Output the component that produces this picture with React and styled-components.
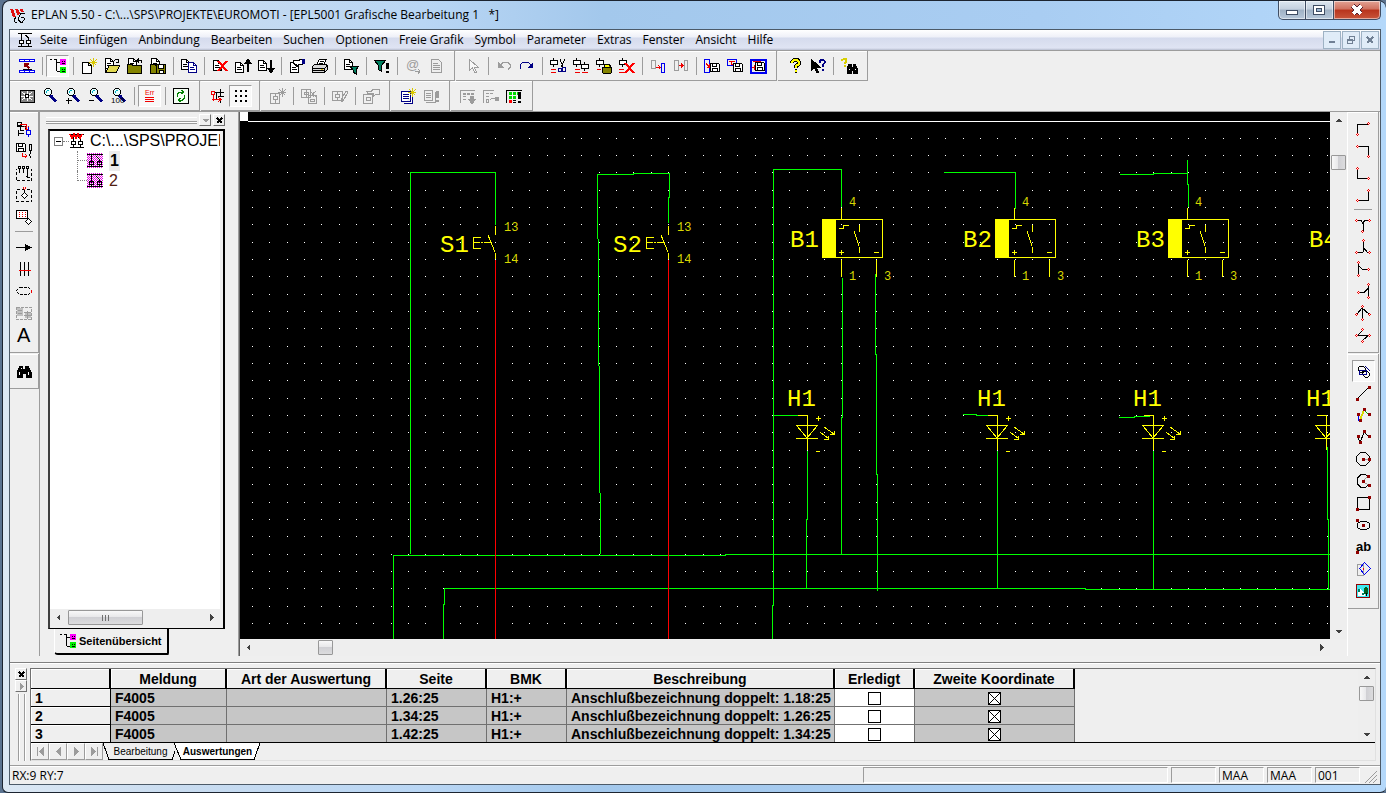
import { memo } from "react";
import styled, { createGlobalStyle, css } from "styled-components";

const GlobalStyle = createGlobalStyle`
  * {
    box-sizing: border-box;
  }

  body {
    margin: 0;
    background: #5b7390;
    color: #000;
    font: 12px/16px "Open Sans", "Noto Sans", sans-serif;
  }

  button {
    margin: 0;
    padding: 0;
    border: 0;
    border-radius: 0;
    background: none;
    color: inherit;
    font: inherit;
  }
`;

const FACE = "#efefef";
const SHADOW = "#9c9c9c";
const K = "#000";
const R = "#f00000";
const M = "#900000";
const B = "#0000f0";
const N = "#000084";
const G = "#9c9c9c";
const Y = "#ffff00";
const OLIVE = "#848400";
const TEAL = "#008060";

/* Glyphs live on a 16x16 grid. Shape: [path, stroke, fill, width, dash]; label: { t, x, y, size, fill, bold } */
const page = (x, y, stroke = K, fill = "#fff") => [
  [`M${x}.5 ${y}.5h5l3 3v7h-8z`, stroke, fill],
  [`M${x + 5}.5 ${y}.5v3h3M${x + 2} ${y + 5}.5h4M${x + 2} ${y + 7}.5h5`, stroke],
];
const star = (stroke = "#d8c800") => [["M12.5 0v9M8 4.5h8M9.5 1.5l6 6M15.5 1.5l-6 6", stroke]];
const symbol = (x, y, stroke = K) => [
  [`M${x}.5 ${y + 2}.5h7v4h-7zM${x + 3}.5 ${y}v3M${x + 3}.5 ${y + 7}v2`, stroke, "#fff"],
];
const disk = (x, y) => [
  [`M${x}.5 ${y}.5h8l1 1v7h-9z`, K, "#fff"],
  [`M${x + 2}.5 ${y}.5v3h4v-3M${x + 2}.5 ${y + 9}v-4h5v4`, K],
];
const lens = [
  ["M4.5 .5h3l2 2v3l-2 2h-3l-2-2v-3z", K, "#e8ffff"],
  ["M5 2.5h2M4.5 3v2", "#00b0c0"],
  ["M8.5 7.5l5.5 6", N, null, 3],
];
const nodes = (...points) => [[points.map(([x, y]) => `M${x - 1} ${y}l1-1 1 1-1 1z`).join(""), R, "#fff"]];
const squares = (...points) => [[points.map(([x, y]) => `M${x - 1} ${y - 1}h3v3h-3z`).join(""), null, M]];
const funnel = (x, y) => [[`M${x} ${y}h9l-3 4v4l-3-2v-2z`, K, TEAL]];
const schema = [
  ["M1 1.5h14M1 14.5h14M4.5 1v7M11.5 5v4M8 3l4 3", K],
  ["M2.5 8.5h4v3h-4zM9.5 8.5h4v3h-4zM4.5 12v3M11.5 12v3", K, "#fff"],
];

const GLYPHS = {
  rails: [
    ["M.5 1.5h15v2h-15zM5.5 1v2M10.5 1v2M.5 12.5h15v2h-15zM5.5 12v2M10.5 12v2", B, "#fff"],
    ["M10.5 10.5l-5-5M5.5 9v-3.5h4", M, null, 2],
    ["M4 11.5h9", K],
  ],
  pageTree: [
    ["M0 1.5h2M4 1.5h2M6.5 1v12M7 13.5h3M7 4.5h3", K],
    ["M10 1h6v6h-6z", null, "#ff00ff"],
    ["M10 9h6v6h-6z", null, "#00f000"],
    ["M12 3.5h1M14 3.5h1M12 5.5h3M12 11.5h1M14 11.5h1M12 13.5h3", K],
  ],
  newPage: [["M1.5 4.5h6l3 3v8h-9zM7.5 4.5v3h3", K, "#fff"], ...star()],
  openPage: [
    ...page(1, 0),
    ["M10 2.5l2-1h2v3M12 4.5h3", K],
    ["M1.5 14.5v-7M1.5 14.5l4-7h10l-3 7z", K, "#e0d850"],
  ],
  closePage: [
    ...page(1, 0),
    ["M14.5 5v-3h-4M12 .5l-2 2 2 2", K],
    ["M.5 15v-9h4l1 1h9v8z", K, OLIVE],
  ],
  savePage: [
    ...page(1, 0),
    ["M.5 15v-9h4l1 1h9v8z", K, OLIVE],
    ["M6.5 6.5h9v9h-9z", K, OLIVE],
    ["M8.5 7v3h5v-3M9.5 15v-3h4v3", K, "#fff"],
  ],
  copyPage: [...page(0, 1), ...page(7, 4, N)],
  deletePage: [...page(1, 2), ["M6 3l9 10M15 3l-9 10", "#ff0000", null, 2]],
  pageUp: [...page(0, 4), ["M13 14v-12", K, null, 2], ["M9.5 5.5l3.5-4 3.5 4z", K, K]],
  pageDown: [...page(0, 2), ["M13 2v12", K, null, 2], ["M9.5 10.5l3.5 4 3.5-4z", K, K]],
  pageProps: [...page(1, 4), ["M4 2.5h6l1-1h2v5h-3l-2 2-1-2-3-1z", K, "#fff"], ["M13 1h3v5h-3z", null, N]],
  print: [
    ["M4.5 7l3-6h7l-3 6", K, "#fff"],
    ["M8 3.5h4M7 5.5h4", K],
    ["M.5 8.5l2-2h11l2 1v4l-3 3h-12z", K, "#d8d8d8"],
    ["M1 10.5h11l3-2M1 12.5h11M12.5 11v3", K],
    ["M9 11.5h2", "#e0c000"],
  ],
  exportPage: [...page(1, 1), ...funnel(7, 8)],
  filter: [["M.5 2.5h11l-4 5v6l-3-2v-4z", K, TEAL], ["M13.5 5v6M13.5 13v2", K, null, 3]],
  at: [{ t: "@", x: 1, y: 11, size: 13, fill: G }, ["M10 13.5h5M13 11l2 2-2 3", G]],
  sheet: [["M3.5 1.5h7l3 3v10h-10zM5 5.5h5M5 7.5h7M5 9.5h7M5 11.5h7", G]],
  pointer: [["M4.5 1.5v11l3-3 2 5h2l-2-5h4z", G, "#f8f8f8"]],
  undo: [["M4 7.5l3-3h5l2 2v3l-2 2", G], ["M2 4v6h6z", null, G]],
  redo: [["M2 11l-1-2v-2l3-3h5l3 3", N], ["M14 4v6h-6z", null, N]],
  cut: [...symbol(0, 0), ["M1 11.5h5M1 14.5h5", R], ["M10 1l3 8M15 1l-4 8", K], ["M8.5 10.5h3v3h-3zM12.5 9.5h3v4h-3z", N]],
  copy: [...symbol(0, 0), ...symbol(8, 4), ["M2 11.5h5M2 14.5h5M9 14.5h6", R]],
  paste: [
    ...symbol(0, 0),
    ["M1 11.5h4", R],
    ["M6.5 9.5h9v5l-1 1h-7l-1-1zM8 9l1-3h4l2 3", K, OLIVE],
    ["M9 7.5h4", Y, null, 2],
  ],
  remove: [...symbol(0, 0), ["M0 11.5h5M0 14.5h5", R], ["M6 5l9 10M15 5l-9 10", "#ff0000", null, 2]],
  moveTo: [["M1.5 2.5h4v8h-4z", G], ["M6 9.5h5M8.5 7.5l2 2-2 2", R], ["M11.5 5.5h3v9h-3z", B]],
  moveBetween: [["M1.5 2.5h4v10h-4zM11.5 2.5h3v10h-3z", G], ["M6 7.5h4M8 5.5l2 2-2 2", R]],
  macroWindow: [["M.5 1.5h5v13h-5z", B], ["M2 5l3 4M5 6v3h-2", R], ...disk(6, 5)],
  macroSymbol: [["M.5 1.5h9v6h-9z", B], ["M2 3.5h6M4 3v3h4", R], ...disk(6, 5)],
  macroPage: [["M.5 1.5h15v13h-15z", B, null, 2], ["M3 3.5h8M2 9.5h4M4 7.5l2 2-2 2", R], ...disk(5, 4)],
  help: [
    ["M5 5V4l2-2h4l1 2v2l-3 2v2M8 13h2", K, null, 4],
    ["M5 5V4l2-2h3l2 2v2l-3 2v2M8 13h2", Y, null, 2],
  ],
  contextHelp: [
    ["M1.5 1.5v11l3-3 2 5h2l-2-5h4z", K, K],
    ["M9.5 5V3l2-1h2l1 1v2l-2 2v2M12 11.5h2", N, null, 2],
  ],
  searchHelp: [
    ["M1 3V2l2-1h2v3l-2 2M2.5 8h2", "#d8d000", null, 2],
    ["M6 15v-5l2-4h2v3h2v-3h2l2 4v5h-4v-3h-2v3z", K, K],
    ["M8 11.5h1M14 11.5h1", "#fff"],
  ],
  fit: [
    ["M1 2h14v12h-14z", K, "#848484"],
    ["M3 4l10 8M13 4l-10 8M8 3v3M8 10v3M2 8h4M10 8h4", "#fff"],
    ["M6.5 6.5h3v3h-3z", K, "#fff"],
  ],
  zoom: lens,
  zoomIn: [...lens, ["M1 12.5h6M3.5 10v6", K]],
  zoomOut: [...lens, ["M1 12.5h5", K]],
  zoomAll: [...lens, { t: "100", x: 0, y: 15, size: 8, fill: K }],
  errors: [{ t: "Err", x: 3, y: 7, size: 7, fill: R }, ["M3 9.5h9M3 11.5h9M3 13.5h9", R]],
  refresh: [
    ["M.5 .5h15v15h-15z", K, "#f4fff4"],
    ["M4.5 9v-3l2-2h4M8.5 2l2 2-2 2M11.5 7v3l-2 2h-4M7.5 10l-2 2 2 2", "#008000"],
  ],
  links: [
    ["M4 4.5h10M8 8.5h6M6.5 4v7M10.5 1v7M3 11.5h9M10.5 11v4", K],
    ["M1.5 3.5h3v3h-3zM3.5 7v6M2 11.5h9M8 9l3 2.5-3 2.5", R],
  ],
  gridDots: [["M2 2h2v2h-2zM7 2h2v2h-2zM12 2h2v2h-2zM2 7h2v2h-2zM7 7h2v2h-2zM12 7h2v2h-2zM2 12h2v2h-2zM7 12h2v2h-2zM12 12h2v2h-2z", null, K]],
  symNew: [["M.5 5.5h9v10h-9zM3 8.5h4v3h-4zM5.5 6v2M5.5 12v3", G], ["M12.5 0v9M8 4.5h8M9.5 1.5l6 6M15.5 1.5l-6 6", G]],
  symCopy: [["M.5 1.5h9v8h-9zM3 4.5h4v2h-4zM5.5 2v7", G], ["M7.5 7.5h8v8h-8zM9 11.5h4v2h-4zM12.5 4v5M9 3l6 6M15 3l-6 6", G]],
  symEdit: [["M.5 3.5h10v9h-10zM3 6.5h4v3h-4zM5.5 4v3M5.5 10v2M14 3l-5 9v2l2-1 5-9z", G]],
  symHand: [["M.5 6.5h9v9h-9zM3 9.5h4v3h-4zM4 3.5h4l2-2h6v5h-3l-3 2v-3h-5z", G]],
  listNew: [["M1.5 3.5h9v10h-9zM3.5 15.5h9v-9", N, "#fff"], ["M3 6.5h6M3 8.5h6M3 10.5h6", N], ...star()],
  listCheck: [["M1.5 2.5h8v10h-8zM3 5.5h5M3 7.5h5M3 9.5h5M3 14.5h9v-11", G], ["M14 3v7M14 12v2", G, null, 3]],
  tableDown: [
    ["M.5 15v-13h14M3 8.5h3M3 11.5h3", G],
    ["M3 5.5h3M7 5.5h3M11 5.5h3", G, null, 2],
    ["M12 8v4", G, null, 4],
    ["M8.5 11.5h7l-3.5 4z", G, G],
  ],
  tableLink: [["M.5 15v-13h10M3 5.5h3M7 5.5h3M3 8.5h3M3 11.5h2v3h-2zM7 12l2-2h3", G], ["M12 9h4v4h-4z", null, G]],
  tableCheck: [
    ["M.5 15v-13h15", K],
    ["M3 4h3v3h-3zM7 4h3v3h-3zM11 4h3v3h-3zM3 8h3v3h-3zM7 8h3v3h-3z", null, "#00d800"],
    ["M3 12h3v3h-3z", null, "#ff0000"],
    ["M7 12.5h3M7 14.5h3", K],
    ["M13 4v7M13 13v2", K, null, 3],
  ],
  wiring: [
    ["M1.5 1.5h4v3h-4zM.5 5.5h4v4M.5 5.5h10M2.5 9v6M4 9.5h4M2.5 12.5h5M9.5 6v3", K],
    ["M4 3.5h6v3M8 5l3 3M9 8h3v-3", R],
    ["M10.5 9.5h4v4h-4zM12.5 6v3M12.5 14v2", B],
  ],
  diskSwitch: [...disk(0, 0), ["M13.5 1.5h2v6h-2zM14.5 8v3M13 11l2 4", K], ["M6 10v3h5M9 11l2 2-2 2", R]],
  terminals: [
    ["M.5 15v-11M.5 15.5h15v-12", K, null, 1, "3 2"],
    ["M2.5 1.5h2v2h-2zM6.5 1.5h2v2h-2zM10.5 1.5h2v2h-2zM3.5 4v4M7.5 4v4M11.5 4v9M10 11l4 2", K],
  ],
  blackBox: [["M.5 2.5h15v12h-15z", K, null, 1, "3 2"], ["M8.5 5.5l3 3-3 3-3-3zM8.5 2v3", K, "#fff"], ["M7 .5l1.5 2L10 .5", R]],
  cabinet: [["M.5 1.5h11v8h-11z", K, "#fff"], ["M3.5 3v5M6.5 3v5M9.5 3v5", R, null, 1, "1 1"], ["M12.5 9.5l3 3-3 3-3-3z", K, "#fff"]],
  arrow: [["M0 8.5h12", K], ["M9 5l7 3.5-7 3.5z", null, K]],
  cable: [["M4.5 1v14M8.5 1v14M12.5 1v14", K], ["M3 9.5h12", R]],
  shield: [["M3.5 4.5h9l3 3v1l-3 3h-9l-3-3v-1z", K, null, 1, "3 1"], ["M15 7v3", R]],
  plcBox: [["M.5 2.5h15v12h-15z", G, null, 1, "3 1"], ["M1 3h6v8h-6zM9 7h6v6h-6z", null, "#c0c0c0"], ["M2 5.5h4M2 8.5h4M8 7.5h7M8 10.5h7M11.5 6v8", G]],
  letter: [{ t: "A", x: 1, y: 15, size: 20, fill: K }],
  binoculars: [["M1 14v-5l3-6h2l1 3h2l1-3h2l3 6v5h-5v-4h-4v4z", K, K], ["M3.5 9v3M12.5 9v3M5 5v1", "#fff"]],
  corner1: [["M2.5 13v-10h11", K], ...nodes([2.5, 13.5], [13.5, 2.5])],
  corner2: [["M2.5 3.5h11v10", K], ...nodes([2.5, 3.5], [13.5, 13.5])],
  corner3: [["M2.5 3v10h11", K], ...nodes([2.5, 3.5], [13.5, 13.5])],
  corner4: [["M13.5 3v10h-11", K], ...nodes([13.5, 3.5], [2.5, 13.5])],
  teeDown: [["M1 3.5h5l2 3 2-3h4M8.5 4v11", K], ...nodes([1.5, 3.5], [14.5, 3.5], [7.5, 14.5])],
  teeUp: [["M1 13.5h7M8.5 2v11M9 9l3 4h2", K], ...nodes([8.5, 1.5], [1.5, 13.5], [14.5, 13.5])],
  teeRight: [["M3.5 2v13M4 5l3 3h7", K], ...nodes([3.5, 1.5], [3.5, 14.5], [13.5, 8.5])],
  teeLeft: [["M13.5 2v13M3 9.5h6l4-4", K], ...nodes([13.5, 1.5], [13.5, 14.5], [3.5, 9.5])],
  crossUp: [["M7.5 2v12M2 9l5-6 7 6", K], ...nodes([7.5, 1.5], [1.5, 9.5], [7.5, 14.5], [14.5, 9.5])],
  crossJump: [["M1 8.5h14M3 8l5-5M8 13l6-5M3 8h10", K], ...nodes([7.5, 2.5], [1.5, 8.5], [14.5, 8.5], [7.5, 14.5])],
  shapes: [["M4.5 3.5h4l2 2v2l-2 2h-3l-2-2v-3zM7.5 8.5h5l2 2v2l-2 2h-2l-3-3z", K], ["M4.5 7.5h7v4h-7zM10 3l5 5", N]],
  line: [["M2 14l12-12", K], ...squares([2, 14], [14, 2])],
  polyColor: [["M3.5 7v7", B], ["M5 13l4-10", "#d8d800", null, 2], ["M9 3l5 5", "#00b000"], ...squares([3, 7], [5, 13], [9, 2], [14, 7])],
  poly: [["M3 7l2 7 4-11 5 5", K], ...squares([3, 7], [5, 13], [9, 2], [14, 7])],
  circle: [["M5.5 1.5h5l4 4v5l-4 4h-5l-4-4v-5z", K], ["M8 8.5h7", G], ...squares([8, 8], [14, 8])],
  arc: [["M13 3l-3-1.5h-4l-4 4v5l4 4h4l3-2", K], ["M8 8.5l6 4M8 8l5-5", G], ...squares([8, 8], [13, 3], [14, 12])],
  rect: [["M2.5 2.5h12v12h-12z", K], ...squares([2, 14], [14, 2])],
  ellipse: [["M5.5 4.5h6l3 2v4l-3 2h-6l-3-2v-4z", K], ...squares([2, 3], [8, 8])],
  abText: [{ t: "ab", x: 1, y: 12, size: 13, fill: K, bold: true }, ...squares([2, 13])],
  mirror: [["M2.5 3.5h6v11h-6z", G], ["M9.5 1.5l6 6-6 6-5-6z", B], ["M8.5 7v2", R]],
  image: [
    ["M1.5 1.5h13v13h-13z", M, "#40e8f0"],
    ["M3 13v-5l3-2 2 3h2v4z", null, "#fff"],
    ["M3 6h2v3h-2zM7 10h2v2h-2z", null, TEAL],
    ["M9 6l2-3 2 3v5h-4z", null, "#006020"],
    ["M11.5 10v3", K],
  ],
  schema,
  project: [...schema, ["M1 1l2 4 2-4 2 4 2-4 2 4 2-4", "#ff0000", null, 2]],
};

const Svg = styled.svg`
  display: block;
  flex: none;
  overflow: visible;
  shape-rendering: crispEdges;
`;

const Icon = memo(({ name }) => (
  <Svg width="16" height="16" viewBox="0 0 16 16" aria-hidden="true">
    {GLYPHS[name].map((part, i) =>
      Array.isArray(part) ? (
        <path
          key={i}
          d={part[0]}
          stroke={part[1] || "none"}
          fill={part[2] || "none"}
          strokeWidth={part[3] || 1}
          strokeDasharray={part[4]}
        />
      ) : (
        <text
          key={i}
          x={part.x}
          y={part.y}
          fontSize={part.size}
          fill={part.fill}
          fontWeight={part.bold ? 700 : 400}
          fontFamily="Liberation Sans, sans-serif"
        >
          {part.t}
        </text>
      )
    )}
  </Svg>
));

/* Window frame */

const Frame = styled.div`
  display: flex;
  flex-direction: column;
  height: 100vh;
  min-width: 900px;
  margin-left: 2px;
  padding: 0 5px 7px 6px;
  overflow: hidden;
  border: 1px solid #1c2430;
  border-width: 1px 0 1px 1px;
  border-radius: 8px 8px 6px 6px;
  background: linear-gradient(90deg, #dce8f4 0, #c9dcf0 180px, #b9d6f4 420px, #a3c8ec 600px, #a9cdf2 75%, #b4d8fa);
`;

const TitleBar = styled.header`
  display: flex;
  flex: none;
  height: 28px;
  align-items: flex-start;

  h1 {
    flex: 1;
    margin: 5px 0 0 5px;
    font-size: 12px;
    line-height: 18px;
    font-weight: 400;
    white-space: pre;
  }

  .logo {
    margin: 6px 0 0 0;
  }
`;

const CaptionButton = styled.button`
  display: grid;
  place-items: center;
  width: ${({ $close }) => ($close ? 47 : 28)}px;
  height: 19px;
  border: solid #3f4d63;
  border-width: 0 1px 1px 0;
  box-shadow: inset 0 0 0 1px rgba(255, 255, 255, 0.5);
  background: ${({ $close }) =>
    $close
      ? "linear-gradient(#e3a394, #d0715f 45%, #b8341c 50%, #c8553a)"
      : "linear-gradient(#dde7f0, #c4d0de 45%, #9fb1c4 50%, #b7c8da)"};

  &:first-child {
    border-left-width: 1px;
    border-bottom-left-radius: 5px;
  }

  &:last-child {
    border-bottom-right-radius: 5px;
  }
`;

const Captions = styled.div`
  display: flex;
`;

const Client = styled.div`
  display: flex;
  flex: 1;
  flex-direction: column;
  min-height: 0;
  border: 1px solid #4c5a68;
  background: ${FACE};
`;

const MenuBar = styled.nav`
  display: flex;
  flex: none;
  align-items: center;
  height: 21px;
  padding: 0 1px 0 7px;
  border-bottom: 1px solid ${SHADOW};
  background: linear-gradient(#fff, #eef0f8 35%, #d5dbed 40%, #dfe4f3 90%, #b8bfd0);

  ul {
    display: flex;
    flex: 1;
    gap: 11px;
    margin: 0;
    padding: 0 0 0 7px;
    list-style: none;
  }

  li {
    line-height: 16px;
  }
`;

const MdiButton = styled.button`
  display: grid;
  place-items: center;
  width: 18px;
  height: 18px;
  margin-left: 1px;
  border: 1px solid #9eb2c4;
  background: #e0ecf8;
`;

/* Tool bars */

const ToolBand = styled.div`
  display: flex;
  flex: none;
  height: 30px;
  align-items: stretch;
`;

const Group = styled.div`
  display: flex;
  align-items: center;
  flex-direction: ${({ $column }) => ($column ? "column" : "row")};
  padding: ${({ $column }) => ($column ? "6px 0" : "0 7px 0 5px")};
  border: 0 solid ${SHADOW};
  border-width: 0 1px 1px 0;
  box-shadow: inset 0 1px #fff;
  margin-right: ${({ $column }) => ($column ? 0 : 1)}px;
  margin-bottom: ${({ $column }) => ($column ? 1 : 0)}px;
`;

const ToolButton = styled.button`
  display: grid;
  place-items: center;
  width: 23px;
  height: 22px;

  ${({ $pressed }) =>
    $pressed &&
    css`
      border: 1px solid #fff;
      border-top-color: ${SHADOW};
      border-left-color: ${SHADOW};
      background: #f8f8f8;
    `}
`;

const Separator = styled.span`
  flex: none;
  background: ${SHADOW};
  width: ${({ $column }) => ($column ? 18 : 1)}px;
  height: ${({ $column }) => ($column ? 1 : 18)}px;
  margin: ${({ $column }) => ($column ? "3px 0 4px" : "0 3px 0 4px")};
`;

const ToolGroup = ({ items, column, pressed = [] }) => (
  <Group $column={column} role="toolbar">
    {items.map((name, i) =>
      name === "|" ? (
        <Separator key={i} $column={column} />
      ) : (
        <ToolButton key={i} type="button" aria-label={name} $pressed={pressed.includes(name)}>
          <Icon name={name} />
        </ToolButton>
      )
    )}
  </Group>
);

/* Scroll bars */

const ScrollSide = styled.div`
  display: flex;
  flex: none;
  width: 17px;
`;

const ScrollRail = styled.div`
  display: flex;
  flex: none;
  flex-direction: ${({ $column }) => ($column ? "column" : "row")};
  align-items: center;
  width: ${({ $column }) => ($column ? "17px" : "auto")};
  height: ${({ $column }) => ($column ? "auto" : "17px")};
  background: #eeeeee;

  > span {
    flex: 1;
  }
`;

const ScrollArrow = styled.button`
  display: grid;
  place-items: center;
  width: 17px;
  height: 16px;
`;

const Thumb = styled.div`
  display: flex;
  flex: none;
  align-items: center;
  justify-content: center;
  gap: 2px;
  width: ${({ $length, $column }) => ($column ? 15 : $length)}px;
  height: ${({ $length, $column }) => ($column ? $length : 15)}px;
  margin: ${({ $offset, $column }) => ($column ? `${$offset}px 0 0` : `0 0 0 ${$offset}px`)};
  border: 1px solid #989898;
  border-radius: 1px;
  background: linear-gradient(${({ $column }) => ($column ? "90deg" : "180deg")}, #f8f8f8, #e8e8ea 45%, #d0d0d4 50%, #dcdcde);

  i {
    width: 1px;
    height: 6px;
    background: #707070;
  }
`;

const ARROWS = {
  left: "M5 0v7L1.5 3.5z",
  right: "M2 0v7l3.5-3.5z",
  up: "M0 5h7L3.5 1.5z",
  down: "M0 2h7L3.5 5.5z",
};

const Arrow = ({ to, fill = "#404040" }) => (
  <Svg width="7" height="7" viewBox="0 0 7 7" aria-hidden="true">
    <path d={ARROWS[to]} fill={fill} />
  </Svg>
);

const Cross = () => (
  <Svg width="7" height="7" aria-hidden="true">
    <path d="M1 1l5 5M6 1l-5 5" stroke={K} strokeWidth="2" />
  </Svg>
);

const ScrollBar = ({ column, offset, length = 15, ribbed }) => (
  <ScrollRail $column={column}>
    <ScrollArrow type="button" aria-label="Zurück">
      <Arrow to={column ? "up" : "left"} />
    </ScrollArrow>
    <Thumb $column={column} $offset={offset} $length={length}>
      {ribbed && (
        <>
          <i />
          <i />
          <i />
        </>
      )}
    </Thumb>
    <span />
    <ScrollArrow type="button" aria-label="Vor">
      <Arrow to={column ? "down" : "right"} />
    </ScrollArrow>
  </ScrollRail>
);

/* Work area */

const WorkArea = styled.div`
  display: flex;
  flex: 1;
  min-height: 0;
  border-top: 1px solid ${SHADOW};
`;

const SideTools = styled.div`
  flex: none;
  width: ${({ $width }) => $width}px;
  border-left: ${({ $light }) => ($light ? "1px solid #fff" : 0)};
  border-right: 1px solid ${({ $light }) => ($light ? FACE : SHADOW)};
`;

const Navigator = styled.aside`
  display: flex;
  flex: none;
  flex-direction: column;
  width: 199px;
  padding: 2px 13px 1px 6px;
  border-right: 1px solid ${SHADOW};
`;

const Grip = styled.div`
  display: flex;
  flex: none;
  align-items: center;
  gap: 2px;
  height: 12px;

  i {
    flex: 1;
    height: 6px;
    border: solid #fff;
    border-width: 1px 0;
    box-shadow: 0 1px ${SHADOW}, inset 0 -1px ${SHADOW};
  }
`;

const TinyButton = styled.button`
  display: grid;
  place-items: center;
  width: 12px;
  height: 12px;
  border: 1px solid #707070;
  border-top-color: #fff;
  border-left-color: #fff;
`;

const TreeFrame = styled.div`
  display: flex;
  flex: 1;
  flex-direction: column;
  min-height: 0;
  margin: 3px 0 0 2px;
  padding: 0 3px 2px 0;
  border: solid #000;
  border-width: 2px 2px 1px 2px;
  border-left-color: #404040;
`;

const TreeView = styled.ul`
  flex: 1;
  margin: 0;
  padding: 0 0 0 4px;
  overflow: hidden;
  list-style: none;
  background: #fff;
  font: 16px/20px "Liberation Sans", sans-serif;
`;

const TreeRow = styled.li`
  display: flex;
  align-items: center;
  gap: 5px;
  height: 20px;
  padding-left: ${({ $depth }) => $depth * 23}px;
  white-space: nowrap;

  b {
    padding: 0 1px;
    background: #ececec;
  }

  span {
    color: ${({ $depth }) => ($depth ? "#502010" : "#000")};
  }
`;

const Toggle = styled.button`
  display: grid;
  place-items: center;
  flex: none;
  width: 9px;
  height: 9px;
  border: 1px solid #808080;
`;

const Stub = styled.i`
  flex: none;
  width: 6px;
  margin: 0 -5px;
  border-top: 1px dotted #808080;
`;

const Branch = styled.i`
  align-self: stretch;
  flex: none;
  width: 10px;
  height: ${({ $last }) => ($last ? 10 : 20)}px;
  margin-right: -5px;
  border-left: 1px dotted #808080;
  background: repeating-linear-gradient(90deg, #808080 0 1px, transparent 1px 2px) 0 9px / 100% 1px no-repeat;
`;

const PanelTab = styled.button`
  display: flex;
  align-items: center;
  align-self: flex-start;
  gap: 3px;
  width: 115px;
  height: 26px;
  margin-left: 8px;
  padding-left: 5px;
  border: solid #000;
  border-width: 0 2px 2px 1px;
  border-left-color: #fff;
  border-radius: 0 0 2px 4px;
  background: ${FACE};
  font: bold 11px/14px "Liberation Sans", sans-serif;
`;

const Editor = styled.main`
  display: flex;
  flex: 1;
  flex-direction: column;
  min-width: 0;
  border-left: 1px solid #606060;
`;

const EditorRow = styled.div`
  display: flex;
  flex: ${({ $grow }) => ($grow ? "1" : "none")};
  min-height: 0;

  > :first-child {
    flex: 1;
    min-width: 0;
  }
`;

const Sheet = styled.svg`
  display: block;
  height: 100%;
  background: #000;
  fill: none;
  shape-rendering: crispEdges;

  .wire {
    stroke: #00ff00;
  }

  .fault {
    stroke: #ff0000;
  }

  .part {
    stroke: #ffff00;
  }

  .solid {
    fill: #ffff00;
  }

  text {
    fill: #ffff00;
    stroke: none;
    font-family: "Liberation Mono", monospace;
    font-size: 24px;
  }

  .pin {
    font-size: 12px;
    fill: #d8d800;
  }
`;

const Switch = ({ x, label }) => (
  <g transform={`translate(${x} 0)`}>
    <text x="200" y="140">{label}</text>
    <path className="part" d="M240.5 125h-7v11h7M233 130.5h7M241 130.5h2M244 130.5h7M248 123l7 17M255.5 114v9M255.5 141v6" />
    <text className="pin" x="264" y="119">13</text>
    <text className="pin" x="264" y="151">14</text>
  </g>
);

const Sensor = ({ x, label }) => (
  <g transform={`translate(${x} 0)`}>
    <text x="550" y="135">{label}</text>
    <path className="solid" d="M582 107h14v39h-14z" />
    <path
      className="part"
      d="M582.5 107.5h60v38h-60zM601.5 96v11M601.5 148v17M636.5 148v17M599 116.5h4v-3h6M619.5 113v7M614 119l5 15M619.5 135v6M599 140.5h5M601.5 138v5M634 140.5h5"
    />
    <text className="pin" x="609" y="94">4</text>
    <text className="pin" x="609" y="168">1</text>
    <text className="pin" x="644" y="168">3</text>
  </g>
);

const Lamp = ({ x }) => (
  <g transform={`translate(${x} 0)`}>
    <text x="547" y="294">H1</text>
    <path
      className="part"
      d="M558 303.5h9M567.5 303v35M556 313.5h22M556 326.5h22M557 314l10 12 10-12M580 320l9 7M584 315l10 7M584 327.5h4v-4M590 322.5h4v-4M576 306.5h5M578.5 304v5M576 339.5h4"
    />
  </g>
);

const GRID_X = [0, 17, 35];
const GRID_Y = [0, 17, 34];

const Schematic = () => (
  <Sheet role="img" aria-label="Stromlaufplan">
    <defs>
      <pattern id="raster" x="12" y="26" width="52" height="52" patternUnits="userSpaceOnUse">
        {GRID_X.map((x) => GRID_Y.map((y) => <rect key={`${x}-${y}`} x={x} y={y} width="1" height="1" fill="#fff" />))}
      </pattern>
    </defs>
    <rect y="10" width="100%" height="100%" fill="url(#raster)" />
    <path d="M8 9.5h4000" stroke="#fff" />
    <rect width="8" height="9" fill="#fff" />
    <g className="wire">
      <path d="M170.5 442v-381.5h85v52.5" />
      <path d="M360.5 442.5l-3-380h36v-1h35.5v24h-1v25" />
      <path d="M532.5 528v-35h1v-435.5h68v37.5" />
      <path d="M602.5 166v139h-1v137M635.5 162v80h1v120h1v117" />
      <path d="M533 303.5h25M567.5 339v68h-1v69" />
      <path d="M704 60.5h71v36M723 302.5h13v1h12M757.5 339v138" />
      <path d="M880 62.5h33v-1h35M947.5 48v24h1v23M879 305.5h15v-1h16M913.5 339v139" />
      <path d="M1087.5 335v72h1v70" />
      <path d="M153.5 528v-84.5h332v-1h4000" />
      <path d="M203.5 528v-36h1v-15.5h641v1h4000" />
    </g>
    <path className="fault" d="M255.5 148v380M428.5 148v380" />
    <Switch x={0} label="S1" />
    <Switch x={173} label="S2" />
    <Sensor x={0} label="B1" />
    <Sensor x={173} label="B2" />
    <Sensor x={346} label="B3" />
    <Sensor x={519} label="B4" />
    <Lamp x={0} />
    <Lamp x={190} />
    <Lamp x={346} />
    <Lamp x={519} />
  </Sheet>
);

/* Message list */

const Messages = styled.section`
  display: flex;
  flex: none;
  margin-top: 6px;
  padding: 5px 4px 4px;
  border-top: 1px solid #808080;
  box-shadow: inset 0 1px #fff;
`;

const MessageGrip = styled.div`
  display: flex;
  flex: none;
  flex-direction: column;
  align-items: center;
  width: 12px;
  margin: 0 3px 0 1px;

  i {
    flex: 1;
    width: 7px;
    margin-top: 2px;
    border: solid ${SHADOW};
    border-width: 0 1px;
    box-shadow: inset 1px 0 #fff, 1px 0 #fff;
  }
`;

const MessageBox = styled.div`
  flex: 1;
  min-width: 0;
  border: 1px solid #707070;
  border-right-color: #e0e0e0;
  border-bottom-color: #e0e0e0;
`;

const TableRow = styled.div`
  display: flex;
  justify-content: space-between;
  border-bottom: 1px solid #000;
`;

const Grid = styled.table`
  flex: none;
  table-layout: fixed;
  width: 1044px;
  border-collapse: separate;
  border-spacing: 0;
  font: bold 14px/16px "Liberation Sans", sans-serif;

  th,
  td {
    height: 18px;
    padding: 0 0 0 4px;
    overflow: hidden;
    border: solid #707070;
    border-width: 0 1px 1px 0;
    background: #c6c6c6;
    text-align: left;
    white-space: nowrap;
  }

  th {
    border-color: #000;
    background: ${FACE};
    box-shadow: inset 1px 1px #fff;
  }

  thead th {
    height: 20px;
    padding: 0;
    border-right-width: 2px;
    text-align: center;
  }

  td.tick {
    padding: 0;
    text-align: center;
  }

  td.open {
    background: #fff;
  }

  tbody tr:last-child > * {
    border-bottom: 0;
    height: 17px;
  }
`;

const Tick = styled.input`
  display: block;
  width: 13px;
  height: 13px;
  margin: 2px auto 0;
  appearance: none;
  border: 1px solid #000;
  background: #fff;

  &:checked {
    background: linear-gradient(45deg, transparent 47%, #000 47% 53%, transparent 53%),
      linear-gradient(-45deg, transparent 47%, #000 47% 53%, transparent 53%), #fff;
  }
`;

const COLUMNS = [
  ["", 80],
  ["Meldung", 116],
  ["Art der Auswertung", 160],
  ["Seite", 100],
  ["BMK", 80],
  ["Beschreibung", 268],
  ["Erledigt", 80],
  ["Zweite Koordinate", 160],
];

const ROWS = [
  ["F4005", "", "1.26:25", "H1:+", "Anschlußbezeichnung doppelt: 1.18:25"],
  ["F4005", "", "1.34:25", "H1:+", "Anschlußbezeichnung doppelt: 1.26:25"],
  ["F4005", "", "1.42:25", "H1:+", "Anschlußbezeichnung doppelt: 1.34:25"],
];

const MessageTable = () => (
  <Grid>
    <colgroup>
      {COLUMNS.map(([title, width]) => (
        <col key={title} width={width} />
      ))}
    </colgroup>
    <thead>
      <tr>
        {COLUMNS.map(([title]) => (
          <th key={title} scope="col">{title}</th>
        ))}
      </tr>
    </thead>
    <tbody>
      {ROWS.map((row, i) => (
        <tr key={i}>
          <th scope="row">{i + 1}</th>
          {row.map((cell, c) => (
            <td key={c}>{cell}</td>
          ))}
          <td className="tick open">
            <Tick type="checkbox" aria-label={`Erledigt ${i + 1}`} />
          </td>
          <td className="tick">
            <Tick type="checkbox" defaultChecked aria-label={`Zweite Koordinate ${i + 1}`} />
          </td>
        </tr>
      ))}
    </tbody>
  </Grid>
);

const TabStrip = styled.div`
  display: flex;
  height: 17px;
`;

const StepButton = styled.button`
  display: grid;
  place-items: center;
  width: 18px;
  height: 17px;
  border: 1px solid ${SHADOW};
  border-top-color: #fff;
  border-left-color: #fff;
`;

const SheetTab = styled.button`
  width: ${({ $active }) => ($active ? 73 : 63)}px;
  border-bottom: 1px solid #000;
  background: ${({ $active }) => ($active ? "#fff" : FACE)};
  font: ${({ $active }) => ($active ? "bold" : "normal")} 10px/15px "Liberation Sans", sans-serif;
  white-space: nowrap;
`;

const STEPS = {
  first: "M1 0h1v9h-1zM8 0v9L3 4.5z",
  left: "M7 0v9L2 4.5z",
  right: "M2 0v9l5-4.5z",
  last: "M1 0v9l5-4.5zM7 0h1v9h-1z",
};

/* Status bar */

const Status = styled.footer`
  display: flex;
  flex: none;
  align-items: stretch;
  gap: 3px;
  height: 19px;
  padding: 1px 3px 1px 2px;
  border-top: 1px solid ${SHADOW};
  box-shadow: inset 0 1px #fff;

  > :first-child {
    flex: 1;
    line-height: 18px;
  }
`;

const StatusCell = styled.span`
  width: ${({ $width = 45 }) => $width}px;
  padding-left: 2px;
  border: 1px solid #fff;
  border-top-color: ${SHADOW};
  border-left-color: ${SHADOW};
  line-height: 16px;
`;

const MENU = [
  "Seite", "Einfügen", "Anbindung", "Bearbeiten", "Suchen", "Optionen", "Freie Grafik",
  "Symbol", "Parameter", "Extras", "Fenster", "Ansicht", "Hilfe",
];

const BAND_1 = [
  [
    "rails", "|", "pageTree", "|", "newPage", "openPage", "closePage", "savePage", "|", "copyPage", "|",
    "deletePage", "pageUp", "pageDown", "|", "pageProps", "print", "|", "exportPage", "|", "filter", "|", "at", "sheet",
  ],
  [
    "pointer", "|", "undo", "redo", "|", "cut", "copy", "paste", "remove", "|", "moveTo", "moveBetween", "|",
    "macroWindow", "macroSymbol", "macroPage",
  ],
  ["help", "contextHelp", "|", "searchHelp"],
];

const BAND_2 = [
  ["fit", "zoom", "zoomIn", "zoomOut", "zoomAll", "|", "errors", "|", "refresh"],
  ["links", "gridDots"],
  ["symNew", "|", "symCopy", "|", "symEdit", "|", "symHand"],
  ["listNew", "listCheck"],
  ["tableDown", "tableLink", "tableCheck"],
];

const LEFT_TOOLS = [
  ["wiring", "diskSwitch", "terminals", "blackBox", "cabinet", "|", "arrow", "cable", "shield", "plcBox", "letter"],
  ["binoculars"],
];

const RIGHT_TOOLS = [
  ["corner1", "corner2", "corner3", "corner4", "|", "teeDown", "teeUp", "teeRight", "teeLeft", "crossUp", "crossJump"],
  ["shapes", "line", "polyColor", "poly", "circle", "arc", "rect", "ellipse", "abText", "mirror", "image"],
];

const PRESSED = ["pageTree", "errors", "gridDots", "shapes"];

const Groups = ({ list, column }) =>
  list.map((items) => <ToolGroup key={items[0]} items={items} column={column} pressed={PRESSED} />);

const PageIcon = () => (
  <Svg width="17" height="16" viewBox="0 0 17 16" aria-hidden="true">
    <defs>
      <pattern id="dither" width="2" height="2" patternUnits="userSpaceOnUse">
        <path d="M0 0h1v1h-1zM1 1h1v1h-1z" fill="#e000e0" />
      </pattern>
    </defs>
    <rect width="16" height="15" fill="url(#dither)" />
    <path d="M0 1.5h16M0 13.5h16M4.5 2v8M12.5 6v4M9 3l4 4M4.5 12v2M12.5 12v2" stroke={K} />
    <path d="M2.5 8.5h4v3h-4zM10.5 8.5h4v3h-4z" stroke={K} fill="url(#dither)" />
  </Svg>
);

const App = () => (
  <>
    <GlobalStyle />
    <Frame>
      <TitleBar>
        <Svg className="logo" width="17" height="16" viewBox="0 0 17 16" aria-hidden="true">
          <path d="M1 2h3l3 8H4zM6 2h3l2 4-2 3zM11 2h3l1 3h-3z" fill="#e01010" />
          <path d="M15.5 6l-4 1-2 4v2l2 2h2l2-3-1-2h-3M7 10l-2 3 1 2h2" stroke={K} fill="none" />
        </Svg>
        <h1>{"EPLAN 5.50 - C:\\...\\SPS\\PROJEKTE\\EUROMOTI - [EPL5001 Grafische Bearbeitung 1   *]"}</h1>
        <Captions>
          <CaptionButton type="button" aria-label="Minimieren">
            <Svg width="13" height="11" viewBox="0 0 13 11">
              <path d="M.5 5.5h11v4h-11z" fill="#fff" stroke="#3f4d63" />
            </Svg>
          </CaptionButton>
          <CaptionButton type="button" aria-label="Maximieren">
            <Svg width="13" height="11" viewBox="0 0 13 11">
              <path d="M.5 .5h11v9h-11z" fill="#fff" stroke="#3f4d63" />
              <path d="M3.5 3.5h5v3h-5z" fill="#9fb9d4" stroke="#3f4d63" />
            </Svg>
          </CaptionButton>
          <CaptionButton type="button" aria-label="Schließen" $close>
            <Svg width="13" height="11" viewBox="0 0 13 11">
              <path d="M2 1l8 8M10 1l-8 8" stroke="#502030" strokeWidth="5" />
              <path d="M2 1l8 8M10 1l-8 8" stroke="#fff" strokeWidth="3" />
            </Svg>
          </CaptionButton>
        </Captions>
      </TitleBar>
      <Client>
        <MenuBar>
          <Icon name="schema" />
          <ul>
            {MENU.map((item) => (
              <li key={item}>
                <button type="button">{item}</button>
              </li>
            ))}
          </ul>
          <MdiButton type="button" aria-label="Fenster minimieren">
            <Svg width="8" height="8"><path d="M1 6h6" stroke="#708094" strokeWidth="2" /></Svg>
          </MdiButton>
          <MdiButton type="button" aria-label="Fenster wiederherstellen">
            <Svg width="9" height="8">
              <path d="M2.5 3v-2.5h5v4h-2M.5 3.5h5v4h-5zM1 4.5h4" stroke="#708094" fill="none" />
            </Svg>
          </MdiButton>
          <MdiButton type="button" aria-label="Fenster schließen">
            <Svg width="8" height="8"><path d="M1 1l6 6M7 1l-6 6" stroke="#708094" strokeWidth="2" /></Svg>
          </MdiButton>
        </MenuBar>
        <ToolBand>
          <Groups list={BAND_1} />
        </ToolBand>
        <ToolBand>
          <Groups list={BAND_2} />
        </ToolBand>
        <WorkArea>
          <SideTools $width={30}>
            <Groups list={LEFT_TOOLS} column />
          </SideTools>
          <Navigator>
            <Grip>
              <i />
              <TinyButton type="button" aria-label="Einklappen">
                <Arrow to="down" fill={G} />
              </TinyButton>
              <TinyButton type="button" aria-label="Schließen">
                <Cross />
              </TinyButton>
            </Grip>
            <TreeFrame>
              <TreeView>
                <TreeRow $depth={0}>
                  <Toggle type="button" aria-label="Zuklappen">
                    <Svg width="5" height="1"><path d="M0 .5h5" stroke={K} /></Svg>
                  </Toggle>
                  <Stub />
                  <Icon name="project" />
                  <span>{"C:\\...\\SPS\\PROJEKTE"}</span>
                </TreeRow>
                <TreeRow $depth={1}>
                  <Branch />
                  <PageIcon />
                  <b>1</b>
                </TreeRow>
                <TreeRow $depth={1}>
                  <Branch $last />
                  <PageIcon />
                  <span>2</span>
                </TreeRow>
              </TreeView>
              <ScrollBar offset={1} length={75} ribbed />
            </TreeFrame>
            <PanelTab type="button">
              <Icon name="pageTree" />
              Seitenübersicht
            </PanelTab>
          </Navigator>
          <Editor>
            <EditorRow $grow>
              <Schematic />
              <ScrollSide>
                <ScrollBar column offset={27} />
              </ScrollSide>
            </EditorRow>
            <EditorRow>
              <ScrollBar offset={61} />
              <ScrollSide />
            </EditorRow>
          </Editor>
          <SideTools $width={33} $light>
            <Groups list={RIGHT_TOOLS} column />
          </SideTools>
        </WorkArea>
        <Messages>
          <MessageGrip>
            <TinyButton type="button" aria-label="Schließen">
              <Cross />
            </TinyButton>
            <TinyButton type="button" aria-label="Ausklappen">
              <Arrow to="right" fill={G} />
            </TinyButton>
            <i />
          </MessageGrip>
          <MessageBox>
            <TableRow>
              <MessageTable />
              <ScrollSide>
                <ScrollBar column offset={1} />
              </ScrollSide>
            </TableRow>
            <TabStrip>
              {Object.entries(STEPS).map(([step, path]) => (
                <StepButton key={step} type="button" aria-label={step}>
                  <Svg width="9" height="9"><path d={path} fill={G} /></Svg>
                </StepButton>
              ))}
              <Svg width="6" height="17"><path d="M0 0l6 16.5" stroke={K} /></Svg>
              <SheetTab type="button">Bearbeitung</SheetTab>
              <Svg width="9" height="17">
                <path d="M2 0h7v17z" fill="#fff" />
                <path d="M0 16.5l3-8M2 0l7 16.5" stroke={K} fill="none" />
              </Svg>
              <SheetTab type="button" $active>Auswertungen</SheetTab>
              <Svg width="7" height="17">
                <path d="M0 0h6l-6 17z" fill="#fff" />
                <path d="M0 16.5l6-16.5" stroke={K} />
              </Svg>
            </TabStrip>
          </MessageBox>
        </Messages>
        <Status>
          <span>RX:9 RY:7</span>
          <StatusCell $width={305} />
          <StatusCell />
          <StatusCell>MAA</StatusCell>
          <StatusCell>MAA</StatusCell>
          <StatusCell>001</StatusCell>
          <Svg width="14" height="16">
            <path d="M2 16L14 4M6 16l8-8M10 16l4-4" stroke={SHADOW} strokeWidth="1" />
          </Svg>
        </Status>
      </Client>
    </Frame>
  </>
);

export default App;
